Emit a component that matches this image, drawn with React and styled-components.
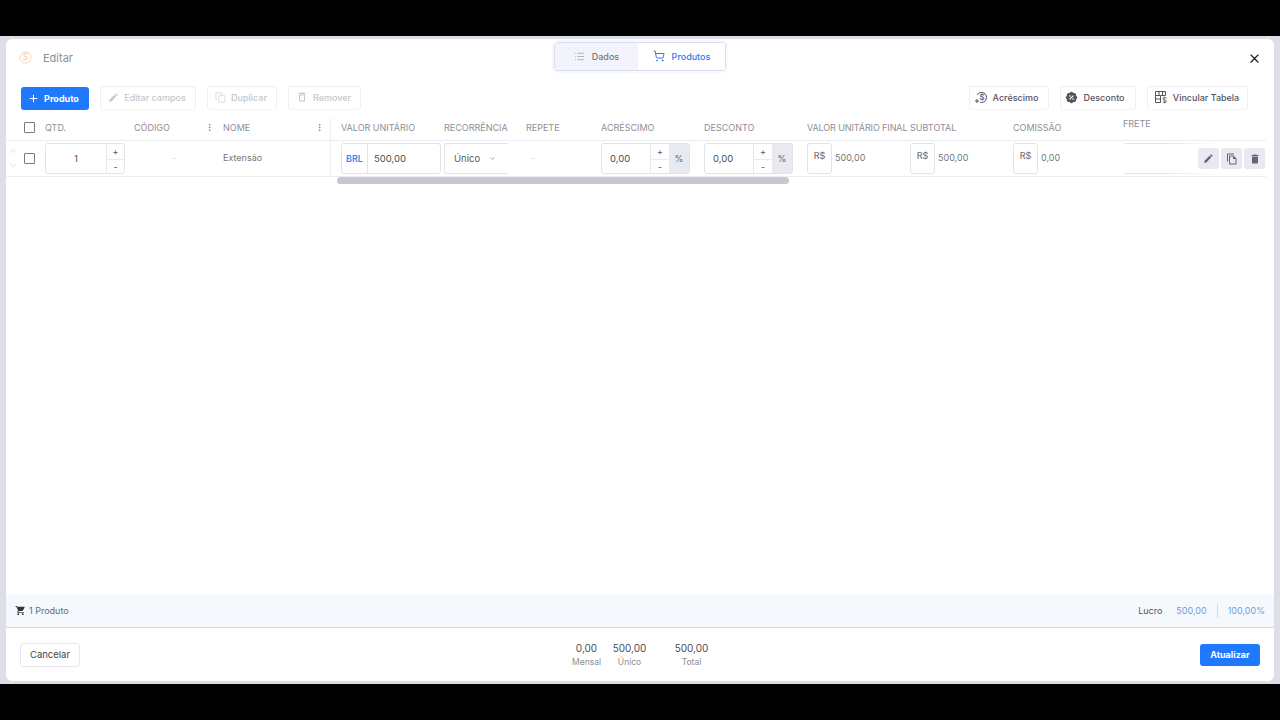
import React from 'react';
import styled, { createGlobalStyle } from 'styled-components';
import { MdEdit, MdOutlineFileCopy, MdDelete, MdShoppingCart, MdClose, MdAdd, MdDeleteOutline } from 'react-icons/md';
import { RiDiscountPercentFill } from 'react-icons/ri';
import { List, ShoppingCart, ChevronDown, ChevronUp, EllipsisVertical, Copy } from 'lucide-react';

const Global = createGlobalStyle`
  html, body { margin: 0; padding: 0; background: #000; }
  body { font-family: Inter, "Noto Sans", sans-serif; }
  * { box-sizing: border-box; }
`;

const Page = styled.div`
  width: 1280px; height: 720px; background: #000; padding: 36px 0; overflow: hidden;
`;
const Backdrop = styled.div`
  height: 648px; background: #dedee8; padding: 3px 6px 3px;
`;
const Modal = styled.div`
  height: 642px; background: #fff; border-radius: 6px; display: flex; flex-direction: column; overflow: hidden;
`;
const Header = styled.header`
  height: 47px; display: grid; grid-template-columns: 1fr auto 1fr; align-items: start; padding: 3px 13px 0 13px;
`;
const Title = styled.div`
  display: flex; align-items: center; gap: 11px; height: 31px; font-size: 11px; color: #8d8d96;
`;
const Tabs = styled.div`
  display: flex; height: 29px; border: 1px solid #d9deee; border-radius: 4px; overflow: hidden;
  box-shadow: 0 0 0 2px #f7f8fd;
`;
const Tab = styled.div`
  display: flex; align-items: center; justify-content: center; gap: 7px; padding-bottom: 1px;
  width: ${p => p.$w}px; font-size: 9px; font-weight: 500;
  background: ${p => p.$active ? '#fff' : '#f2f3fb'};
  color: ${p => p.$active ? '#2f7ae5' : '#77777f'};
`;
const Close = styled.div`
  justify-self: end; height: 32px; display: flex; align-items: center; color: #222; margin-right: -1px;
`;
const Toolbar = styled.div`
  height: 24px; display: flex; justify-content: space-between; padding: 0 26px 0 15px;
`;
const ToolGroup = styled.div`
  display: flex; gap: ${p => p.$gap}px;
`;
const Primary = styled.button`
  font: 700 9px Inter, sans-serif; height: ${p => p.$h || 23}px; margin-top: 1px; width: ${p => p.$w}px; border: 0; border-radius: 3px;
  background: #2078fc; color: #fff; display: flex; align-items: center; justify-content: center; gap: 4px;
  padding: 0 ${p => p.$shift || 0}px 1px 0;
`;
const Ghost = styled.button`
  font: 500 9px Inter, sans-serif; height: 24px; width: ${p => p.$w}px; border: 1px solid #eeeef2; border-bottom-color: #f6f6f8; border-radius: 3px;
  background: #fff; color: ${p => p.$off ? '#c6c6cc' : '#55555d'};
  display: flex; align-items: center; justify-content: center; gap: 5px;
  padding: 0 ${p => p.$shift || 0}px 2px 0;
`;
const Columns = `39px 89px 89px 108px 10px 103px 82px 75px 103px 103px 103px 103px 110px 143px`;
const HeadRow = styled.div`
  display: grid; grid-template-columns: ${Columns}; height: 23px; margin-top: 8px; padding-bottom: 3px; border-bottom: 1px solid #ecedf1;
  font-size: 9px; color: #8e8e96; text-transform: uppercase; align-items: center; width: 1260px;
`;
const Row = styled.div`
  display: grid; grid-template-columns: ${Columns}; height: 36px; border-bottom: 1px solid #ecedf1;
  font-size: 9px; color: #77777f; align-items: center; width: 1260px; position: relative;
`;
const Cell = styled.div`
  display: flex; align-items: center; height: 100%; justify-content: ${p => p.$kebab ? 'space-between' : 'flex-start'};
  padding-right: ${p => p.$kebab || 0}px;
  padding-bottom: ${p => p.$lift || 0}px;
  letter-spacing: ${p => p.$tight ? '-0.1px' : 'normal'};
  white-space: nowrap;
`;
const Divider = styled.div`
  height: calc(100% + ${p => p.$extra || 0}px); align-self: start; border-left: 1px solid #ecedf1; margin-left: -1px;
`;
const SelectCell = styled.div`
  display: flex; align-items: center; justify-content: center; height: 100%; position: relative; padding-left: 8px;
`;
const Sort = styled.div`
  position: absolute; left: 1px; top: 4px; display: flex; flex-direction: column; gap: 2px; color: #cfcfd6;
  & svg { display: block; flex: none; }
`;
const Check = styled.div`
  width: 11px; height: 11px; border: 1px solid #77777d; border-radius: 1px; background: #fff;
`;
const Field = styled.div`
  display: flex; height: 31px; width: ${p => p.$w}px; border: 1px solid #e2e3e9; border-radius: 3px;
  font-size: 9.5px; color: #4c4c54; background: #fff; overflow: hidden;
`;
const FieldText = styled.div`
  flex: 1; display: flex; align-items: center; justify-content: ${p => p.$center ? 'center' : 'flex-start'};
  padding: 0 0 1px ${p => p.$center ? '0' : p.$pad || 8}px;
`;
const Stepper = styled.div`
  width: ${p => p.$w || 18}px; display: grid; grid-template-rows: 1fr 1fr; border-left: 1px solid #e8e8ee;
`;
const Step = styled.div`
  display: flex; align-items: center; justify-content: center; font-size: 9px; color: #55555d;
  & + & { border-top: 1px solid #e8e8ee; }
`;
const Percent = styled.div`
  width: 20px; background: #e9e9f2; display: flex; align-items: center; justify-content: center; font-size: 9px; color: #66666e;
`;
const Currency = styled.div`
  width: 26px; border-right: 1px solid #e2e3e9; display: flex; align-items: center; justify-content: center; padding-bottom: 1px;
  font-size: 9px; font-weight: 600; color: #3f84e8;
`;
const Select = styled.div`
  display: flex; align-items: center; width: 64px; height: 31px; padding: 0 0 1px 9px; gap: 9px;
  border: 1px solid #e2e3e9; border-right: 0; border-radius: 3px 0 0 3px; font-size: 9.5px; color: #5a5a62;
`;
const Dash = styled.div`
  width: 4px; height: 1px; background: #e6e6ea; margin-left: ${p => p.$left}px;
`;
const Money = styled.div`
  display: flex; align-items: center; gap: 3px; font-size: 9px; color: #77777f;
`;
const MoneyBox = styled.div`
  width: 25px; height: 31px; border: 1px solid #e2e3e9; border-radius: 3px; display: flex; justify-content: center;
  padding-top: 6px; font-size: 9px; font-weight: 500; color: #77777f;
`;
const MoneyValue = styled.span`
  padding-bottom: 2px;
`;
const FreteInput = styled.div`
  width: 120px; height: 31px; border: 1px solid #e2e3e9; border-left: 0; border-right: 0; border-radius: 3px;
  -webkit-mask-image: linear-gradient(90deg, #000 30%, transparent 80%); mask-image: linear-gradient(90deg, #000 30%, transparent 80%);
`;
const Actions = styled.div`
  position: absolute; right: 1px; top: 7px; display: flex; gap: 2px;
`;
const ActionBtn = styled.div`
  width: 21px; height: 21px; background: #e9e9f2; border-radius: 3px; display: flex; align-items: center; justify-content: center; color: #66666e;
`;
const Scroll = styled.div`
  height: 7px; width: 452px; margin-left: 331px; background: #c7c7ce; border-radius: 4px; flex: none;
`;
const Spacer = styled.div` flex: 1; `;
const Summary = styled.div`
  height: 34px; background: #f5f8fd; border-bottom: 1px solid #d9d9e4; display: flex; align-items: center; justify-content: space-between;
  padding: 0 9px 0 9px; font-size: 9px; color: #66666e;
`;
const SummaryLeft = styled.div` display: flex; align-items: center; gap: 3px; `;
const SummaryRight = styled.div` display: flex; align-items: center; `;
const Profit = styled.span` color: #55555d; margin-right: 14px; `;
const Blue = styled.span` color: #6f9fe0; `;
const Sep = styled.div` width: 1px; height: 14px; background: #d9d9e4; margin: 0 10px; `;
const Footer = styled.footer`
  height: 53px; display: grid; grid-template-columns: 1fr auto 1fr; align-items: center; padding: 0 14px;
`;
const Cancel = styled.button`
  font: 400 9.5px Inter, sans-serif; color: #44444c; width: 60px; height: 24px; background: #fff; border: 1px solid #e6e6ec; border-radius: 3px; padding: 0; justify-self: start;
`;
const Totals = styled.div` display: flex; gap: 14px; margin-left: 1px; `;
const Total = styled.div`
  display: flex; flex-direction: column; align-items: center; width: ${p => p.$w}px; margin-left: ${p => p.$ml || 0}px;
`;
const TotalValue = styled.div` font-size: 10px; color: #4c4c54; line-height: 14px; margin-top: -1px; `;
const TotalLabel = styled.div` font-size: 8.5px; color: #8e8e96; line-height: 12px; margin-top: 1px; `;
const Update = styled(Primary)` justify-self: end; margin: 0; `;

const Logo = () => (
  <svg width="13" height="13" viewBox="0 0 13 13">
    <circle cx="6.5" cy="6.5" r="5.5" fill="none" stroke="#f5d3b6" strokeWidth="1" />
    <text x="6.5" y="9.4" fontSize="8.5" textAnchor="middle" fill="#f3c6a0" fontFamily="Inter">S</text>
  </svg>
);
const Surcharge = () => (
  <svg width="14" height="14" viewBox="0 0 14 14" fill="none" stroke="#55555d" strokeWidth="1">
    <path d="M3.2 5A5 5 0 1 1 6 12.2" />
    <path d="M1 11h4M3 9v4" />
    <text x="8" y="9.5" fontSize="8" textAnchor="middle" fill="#55555d" stroke="none" fontFamily="Inter">$</text>
  </svg>
);
const LinkTable = () => (
  <svg width="14" height="14" viewBox="0 0 14 14" fill="none" stroke="#55555d" strokeWidth="1">
    <path d="M1.5 1.5h10v4h-5v7h-5zM1.5 5.5h5M1.5 9h5M5 1.5v4M8.5 1.5v4" />
    <text x="10.5" y="13" fontSize="7" textAnchor="middle" fill="#55555d" stroke="none" fontFamily="Inter">$</text>
  </svg>
);

const Kebab = () => <EllipsisVertical size={9} color="#77777f" />;

const PercentField = () => (
  <Field $w={89}>
    <FieldText>0,00</FieldText>
    <Stepper $w={19}><Step>+</Step><Step>-</Step></Stepper>
    <Percent>%</Percent>
  </Field>
);
const MoneyField = ({ value }) => (
  <Money><MoneyBox>R$</MoneyBox><MoneyValue>{value}</MoneyValue></Money>
);

export default function App() {
  return (
    <Page>
      <Global />
      <Backdrop>
        <Modal>
          <Header>
            <Title><Logo />Editar</Title>
            <Tabs>
              <Tab $w={83}><List size={11} color="#8d8d96" strokeWidth={1.4} />Dados</Tab>
              <Tab $w={87} $active><ShoppingCart size={12} color="#2f7ae5" strokeWidth={2} />Produtos</Tab>
            </Tabs>
            <Close><MdClose size={15} /></Close>
          </Header>
          <Toolbar>
            <ToolGroup $gap={11}>
              <Primary $w={68} $shift={4}><MdAdd size={13} />Produto</Primary>
              <Ghost $w={96} $off $shift={2}><MdEdit size={11} />Editar campos</Ghost>
              <Ghost $w={70} $off $shift={2}><Copy size={11} strokeWidth={1.3} />Duplicar</Ghost>
              <Ghost $w={73} $off $shift={2}><MdDeleteOutline size={12} />Remover</Ghost>
            </ToolGroup>
            <ToolGroup $gap={11}>
              <Ghost $w={80} $shift={6}><Surcharge />Acréscimo</Ghost>
              <Ghost $w={76} $shift={6}><RiDiscountPercentFill size={13} color="#55555d" />Desconto</Ghost>
              <Ghost $w={101} $shift={2}><LinkTable />Vincular Tabela</Ghost>
            </ToolGroup>
          </Toolbar>
          <HeadRow>
            <SelectCell><Check /></SelectCell>
            <Cell>Qtd.</Cell>
            <Cell $kebab={9}>Código<Kebab /></Cell>
            <Cell $kebab={7}>Nome<Kebab /></Cell>
            <Divider $extra={3} />
            <Cell>Valor unitário</Cell>
            <Cell>Recorrência</Cell>
            <Cell>Repete</Cell>
            <Cell>Acréscimo</Cell>
            <Cell>Desconto</Cell>
            <Cell $tight>Valor unitário final</Cell>
            <Cell>Subtotal</Cell>
            <Cell>Comissão</Cell>
            <Cell $lift={8}>Frete</Cell>
          </HeadRow>
          <Row>
            <SelectCell>
              <Sort><ChevronUp size={12} strokeWidth={1.3} /><ChevronDown size={12} strokeWidth={1.3} /></Sort>
              <Check />
            </SelectCell>
            <Cell>
              <Field $w={80}>
                <FieldText $center>1</FieldText>
                <Stepper><Step>+</Step><Step>-</Step></Stepper>
              </Field>
            </Cell>
            <Cell><Dash $left={38} /></Cell>
            <Cell $lift={2}>Extensão</Cell>
            <Divider />
            <Cell>
              <Field $w={100}>
                <Currency>BRL</Currency>
                <FieldText $pad={6}>500,00</FieldText>
              </Field>
            </Cell>
            <Cell>
              <Select>Único<ChevronDown size={7} color="#66666e" /></Select>
            </Cell>
            <Cell><Dash $left={5} /></Cell>
            <Cell><PercentField /></Cell>
            <Cell><PercentField /></Cell>
            <Cell><MoneyField value="500,00" /></Cell>
            <Cell><MoneyField value="500,00" /></Cell>
            <Cell><MoneyField value="0,00" /></Cell>
            <Cell><FreteInput /></Cell>
            <Actions>
              <ActionBtn><MdEdit size={11} /></ActionBtn>
              <ActionBtn><MdOutlineFileCopy size={12} /></ActionBtn>
              <ActionBtn><MdDelete size={12} /></ActionBtn>
            </Actions>
          </Row>
          <Scroll />
          <Spacer />
          <Summary>
            <SummaryLeft><MdShoppingCart size={11} color="#33333a" />1 Produto</SummaryLeft>
            <SummaryRight>
              <Profit>Lucro</Profit>
              <Blue>500,00</Blue>
              <Sep />
              <Blue>100,00%</Blue>
            </SummaryRight>
          </Summary>
          <Footer>
            <Cancel>Cancelar</Cancel>
            <Totals>
              <Total $w={26}><TotalValue>0,00</TotalValue><TotalLabel>Mensal</TotalLabel></Total>
              <Total $w={32}><TotalValue>500,00</TotalValue><TotalLabel>Único</TotalLabel></Total>
              <Total $w={32} $ml={16}><TotalValue>500,00</TotalValue><TotalLabel>Total</TotalLabel></Total>
            </Totals>
            <Update $w={60} $h={22}>Atualizar</Update>
          </Footer>
        </Modal>
      </Backdrop>
    </Page>
  );
}
